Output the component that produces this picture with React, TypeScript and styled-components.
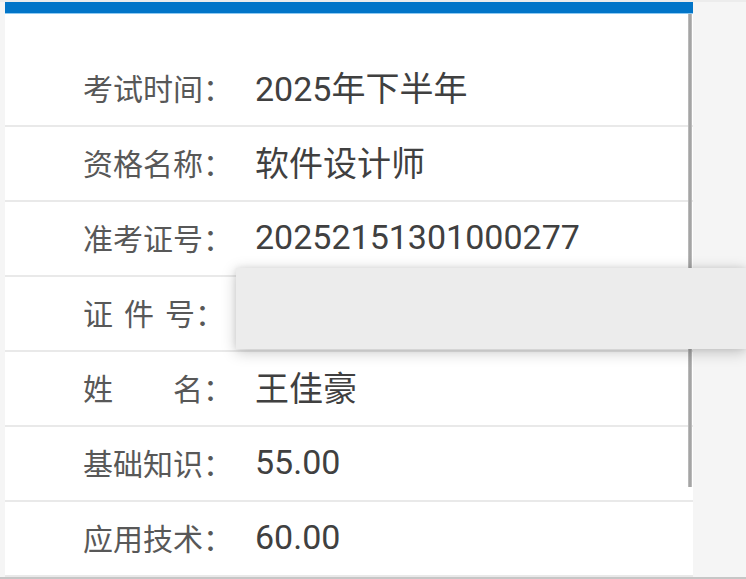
import React from "react";
import styled, { createGlobalStyle } from "styled-components";

const Global = createGlobalStyle`
  html, body { margin: 0; padding: 0; background: #f5f5f5; }
  body { font-family: Roboto, "Noto Sans CJK SC", sans-serif; overflow: hidden; }
`;

const Page = styled.div`
  position: relative;
  width: 746px;
  height: 579px;
  display: flex;
  flex-direction: column;
  background: #f5f5f5;
  overflow: hidden;
`;

const TopStrip = styled.div`
  height: 2px;
  flex: none;
  background: #ececec;
`;

const Main = styled.div`
  flex: 1;
  display: flex;
  padding-left: 5px;
  min-height: 0;
`;

const Panel = styled.div`
  position: relative;
  width: 688px;
  display: flex;
  flex-direction: column;
  background: #ffffff;
`;

const BlueBar = styled.div`
  height: 11px;
  flex: none;
  background: #0275c8;
  border-bottom: 1px solid #8fcaf2;
`;

const List = styled.div`
  padding-top: 38px;
  display: flex;
  flex-direction: column;
`;

const Row = styled.div`
  height: 73px;
  box-sizing: border-box;
  display: flex;
  align-items: center;
  border-bottom: 2px solid #e9e9e9;
  padding: 0 0 4px 78px;
  height: 75px;
`;

const Label = styled.div<{ $spaced?: boolean }>`
  width: 172px;
  flex: none;
  font-size: 30px;
  color: #585858;
  white-space: pre;
  word-spacing: ${(p) => (p.$spaced ? "3.5px" : "0")};
`;

const Value = styled.div`
  font-size: 34px;
  color: #404040;
  white-space: nowrap;
`;

const Scrollbar = styled.div`
  position: absolute;
  right: 1px;
  top: 12px;
  width: 4px;
  height: 473px;
  background: linear-gradient(90deg, #c4c4c4, #9a9a9a 50%, #c4c4c4);
`;

const BottomLine = styled.div`
  height: 2px;
  flex: none;
  background: #c6c6c6;
`;

const Popup = styled.div`
  position: absolute;
  left: 236px;
  right: 0;
  top: 268px;
  height: 81px;
  background: #ececec;
  box-shadow: 0 3px 14px rgba(0, 0, 0, 0.22), 0 0 6px rgba(0, 0, 0, 0.08);
`;

const rows: { label: string; value: string; spaced?: boolean }[] = [
  { label: "考试时间：", value: "2025年下半年" },
  { label: "资格名称：", value: "软件设计师" },
  { label: "准考证号：", value: "20252151301000277" },
  { label: "证 件 号：", value: "", spaced: true },
  { label: "姓\u3000\u3000名：", value: "王佳豪" },
  { label: "基础知识：", value: "55.00" },
  { label: "应用技术：", value: "60.00" },
];

export default function App() {
  return (
    <>
      <Global />
      <Page>
        <TopStrip />
        <Main>
          <Panel>
            <BlueBar />
            <List>
              {rows.map((r) => (
                <Row key={r.label}>
                  <Label $spaced={r.spaced}>{r.label}</Label>
                  <Value>{r.value}</Value>
                </Row>
              ))}
            </List>
            <Scrollbar />
          </Panel>
        </Main>
        <BottomLine />
        <Popup />
      </Page>
    </>
  );
}
